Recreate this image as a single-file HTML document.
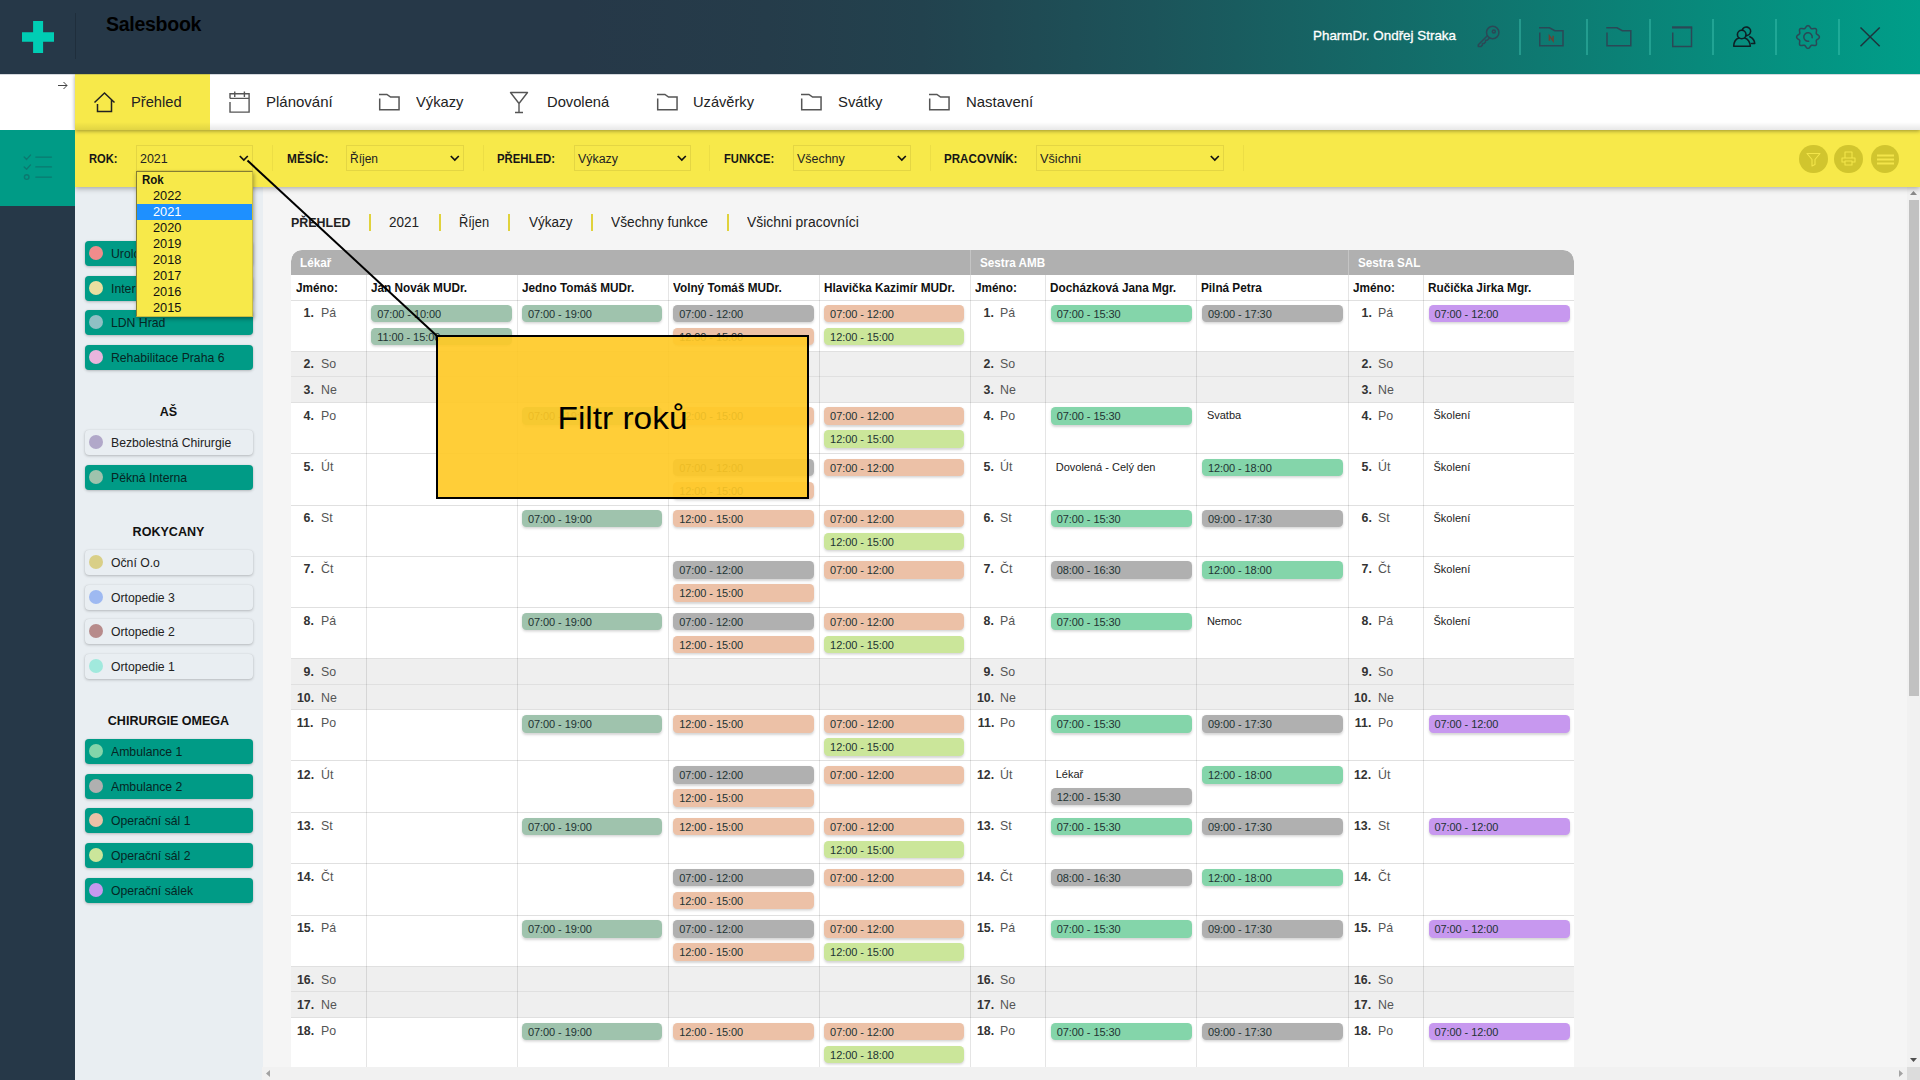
<!DOCTYPE html>
<html lang="cs"><head><meta charset="utf-8"><title>Salesbook</title>
<style>
*{box-sizing:border-box;margin:0;padding:0}
html,body{width:1920px;height:1080px;overflow:hidden;background:#f5f5f5}
body{position:relative;font-family:"Liberation Sans",sans-serif;color:#222;-webkit-font-smoothing:antialiased}
.abs{position:absolute}
#top{position:absolute;left:0;top:0;width:1920px;height:74px;background:linear-gradient(90deg,#263848 0%,#263848 30%,#253c4a 40%,#22424e 48%,#1c545a 60%,#11716c 76%,#08897b 88.5%,#009e89 100%)}
#top .vsep{position:absolute;top:18.500px;height:36px;width:2px;margin-left:-.5px;background:rgba(70,200,180,.42)}
#brand{position:absolute;left:106px;top:12px;font-weight:bold;font-size:19.5px;color:#000;letter-spacing:-0.3px;line-height:24px}
#user{position:absolute;left:1313px;top:27px;font-size:13.3px;color:#fff;-webkit-text-stroke:.3px #fff;line-height:18px;white-space:nowrap}
#nav{position:absolute;left:0;top:74px;width:1920px;height:56px;background:#fff}
#nav .navsh{position:absolute;left:75px;top:0;width:1845px;height:56px;box-shadow:0 1px 4px rgba(0,0,0,.38)}
#nav:before{content:'';position:absolute;left:0;top:0;width:1920px;height:1px;background:rgba(40,60,85,.2);z-index:2}
#nav:after{content:'';position:absolute;left:75px;bottom:0;width:1845px;height:8px;background:linear-gradient(180deg,rgba(0,0,0,0),rgba(0,0,0,.09));z-index:2}
#nav .act{position:absolute;left:75px;top:0;width:135px;height:56px;background:#f7e94a}
#nav .lbl{position:absolute;top:19px;font-size:15px;line-height:18px;color:#222;white-space:nowrap}
#nav svg{position:absolute}
#filter{position:absolute;left:75px;top:130px;width:1845px;height:57px;background:#f7e94a;box-shadow:0 2px 5px rgba(0,0,0,.28)}
#filter .fl{position:absolute;top:22px;font-size:12px;font-weight:bold;line-height:14px;color:#161616;white-space:nowrap}
#filter .sel{position:absolute;top:15px;height:26px;border:1px solid #e4d643;font-size:12.5px;line-height:24px;color:#222}
#filter .sel span{position:absolute;left:3.2px;top:1px;white-space:nowrap}
#filter .sel svg{position:absolute;right:3.5px;top:9px}
#filter .fs{position:absolute;top:15px;height:26px;width:1px;background:#ecde45}
#filter .cb{position:absolute;top:14.7px;width:28.5px;height:28.5px;border-radius:50%;background:#d1c52e}
#teal{position:absolute;left:0;top:130px;width:75px;height:76px;background:#009b86}
#dark{position:absolute;left:0;top:206px;width:75px;height:874px;background:#263848}
#side{position:absolute;left:75px;top:187px;width:188px;height:893px;background:#e9eef2}
#side .item{position:absolute;left:10px;width:168px;height:25px;border-radius:4px;background:#e9eef2;box-shadow:0 1px 3px rgba(0,0,0,.22),0 0 1px rgba(0,0,0,.12);font-size:13px;line-height:25px;color:#222;white-space:nowrap}
#side .item.on{background:#009b86;color:#062624}
#side .item i{position:absolute;left:4.3px;top:5.5px;width:14px;height:14px;border-radius:50%}
#side .item span{position:absolute;left:25.5px;top:0;transform:scaleX(.94);transform-origin:0 50%}
#side .stitle{position:absolute;left:0;width:187px;text-align:center;font-weight:bold;font-size:13.5px;line-height:20px;color:#111;transform:scaleX(.93);margin-top:1px}
#main{position:absolute;left:263px;top:187px;width:1644px;height:880px;background:#f5f5f5}
.bc{position:absolute;top:214px;font-size:14px;line-height:17px;color:#222;white-space:nowrap}
.bcs{position:absolute;top:214px;width:2px;height:17px;background:#e0d23c}
.tbl{position:absolute;left:291px;top:250px;width:1283px;height:817px;overflow:hidden;background:#fff;border-radius:11px 11px 0 0}
.tbl .sec{position:absolute;top:0;height:25px;background:#b0b0b0;color:#fff;font-weight:bold;font-size:12px;line-height:25px;border-left:1px solid #c4c4c4}
.tbl .sec.first{border-left:0;border-top-left-radius:11px}
.tbl .sec.last{border-top-right-radius:11px}
.tbl .sec span{position:absolute;left:8.5px;top:.5px;transform:scaleX(.975);transform-origin:0 50%;white-space:nowrap}
.tbl .sec.first span{left:9px}
.tbl .row{position:absolute;left:0;width:1283px;border-top:1px solid #e0e0e0;background:#fff}
.tbl .row.namerow{border-top:0}
.tbl .row.we{background:#efefef}
.tbl .vl{position:absolute;top:25px;width:1px;height:800px;background:rgba(0,0,0,.1)}
.tbl .hn{position:absolute;font-weight:bold;font-size:12px;line-height:25px;color:#111;white-space:nowrap;transform:scaleX(.98);transform-origin:0 50%;margin:.75px 0 0 0}
.tbl .dn{position:absolute;width:75px;height:25px;font-size:13px;line-height:25px;color:#555}
.tbl .dn b{position:absolute;right:53px;top:0;color:#333;transform:scaleX(.95);transform-origin:100% 50%}
.tbl .dn span{position:absolute;left:29px;top:0;font-weight:normal;transform:scaleX(.95);transform-origin:0 50%}
.tbl .pill{position:absolute;width:140.7px;height:17.5px;border-radius:4.5px;font-size:11px;line-height:18px;padding-left:6px;color:#233;box-shadow:0 1.5px 2.5px rgba(0,0,0,.17);white-space:nowrap;letter-spacing:-.08px}
.tbl .txt{position:absolute;font-size:11px;line-height:18px;color:#222;white-space:nowrap}
.sage{background:#9fc3ad}.gray{background:#b0b0b0}.ora{background:#ecc1a7}.lime{background:#cbe69a}.grn{background:#84d5aa}.pur{background:#c798ef}
#dd{position:absolute;left:136px;top:171px;width:116.5px;height:146px;background:#f7e94a;border:1px solid rgba(95,90,45,.75);border-right-color:rgba(95,90,45,.3);border-bottom-color:rgba(95,90,45,.3);box-shadow:1px 2px 4px rgba(0,0,0,.35);font-size:12.8px;line-height:16px;color:#111}
#dd div{height:16px;padding-left:16px;white-space:nowrap}
#dd div.h{font-weight:bold;padding-left:5px;transform:scaleX(.9);transform-origin:5px 50%}
#dd div.s{background:#1e90ff;color:#fff}
#call{position:absolute;left:436px;top:335px;width:373px;height:164px;border:2px solid #000;background:rgba(255,201,36,.91)}
#call span{position:absolute;left:0;width:100%;top:62px;text-align:center;font-size:31px;line-height:40px;color:#000}
#vsb{position:absolute;left:1907px;top:187px;width:13px;height:880px;background:#f1f1f1}
#vsb i{position:absolute;left:2px;top:13px;width:9.5px;height:496px;background:#c1c1c1}
#hsb{position:absolute;left:262px;top:1067px;width:1645px;height:13px;background:#f1f1f1}
#corner{position:absolute;left:1907px;top:1067px;width:13px;height:13px;background:#dcdcdc}

#n1{transform:scaleX(0.9787);transform-origin:0 50%}
#n2{transform:scaleX(0.9997);transform-origin:0 50%}
#n3{transform:scaleX(0.9822);transform-origin:0 50%}
#n4{transform:scaleX(0.9812);transform-origin:0 50%}
#n5{transform:scaleX(0.9758);transform-origin:0 50%}
#n6{transform:scaleX(0.9885);transform-origin:0 50%}
#n7{transform:scaleX(0.9956);transform-origin:0 50%}
#f1{transform:scaleX(0.9292);transform-origin:0 50%}
#f2{transform:scaleX(0.9881);transform-origin:0 50%}
#f3{transform:scaleX(0.9455);transform-origin:0 50%}
#f4{transform:scaleX(0.9306);transform-origin:0 50%}
#f5{transform:scaleX(0.9669);transform-origin:0 50%}
#s1{transform:scaleX(0.9978);transform-origin:0 50%}
#s2{transform:scaleX(0.9593);transform-origin:0 50%}
#s3{transform:scaleX(0.9926);transform-origin:0 50%}
#s4{transform:scaleX(0.9958);transform-origin:0 50%}
#s5{transform:scaleX(1.0174);transform-origin:0 50%}
#b1{transform:scaleX(0.9223);transform-origin:0 50%}
#b2{transform:scaleX(0.9629);transform-origin:0 50%}
#b3{transform:scaleX(0.9193);transform-origin:0 50%}
#b4{transform:scaleX(0.9662);transform-origin:0 50%}
#b5{transform:scaleX(0.9808);transform-origin:0 50%}
#b6{transform:scaleX(0.9918);transform-origin:0 50%}
#brand{transform:scaleX(1.0027);transform-origin:0 50%}
#user{transform:scaleX(1.0078);transform-origin:0 50%}
#ct{transform:scaleX(1.0781);transform-origin:50% 50%}
</style></head>
<body>
<div id="main"></div>
<div id="side">
<div class="item on" style="top:53.5px"><i style="background:#f08c8c"></i><span>Urologie</span></div>
<div class="item on" style="top:88.5px"><i style="background:#ebdfa0"></i><span>Interna</span></div>
<div class="item on" style="top:122.5px"><i style="background:#8fc0c4"></i><span>LDN Hrad</span></div>
<div class="item on" style="top:157.5px"><i style="background:#e9b5dd"></i><span>Rehabilitace Praha 6</span></div>
<div class="stitle" style="top:214px">AŠ</div>
<div class="item" style="top:242.5px"><i style="background:#b1a8c9"></i><span>Bezbolestná Chirurgie</span></div>
<div class="item on" style="top:277.5px"><i style="background:#9fc3ad"></i><span>Pěkná Interna</span></div>
<div class="stitle" style="top:334px">ROKYCANY</div>
<div class="item" style="top:362.5px"><i style="background:#d9cf87"></i><span>Oční O.o</span></div>
<div class="item" style="top:397.5px"><i style="background:#9eb9f1"></i><span>Ortopedie 3</span></div>
<div class="item" style="top:431.5px"><i style="background:#b78b8b"></i><span>Ortopedie 2</span></div>
<div class="item" style="top:466.5px"><i style="background:#a1e9dd"></i><span>Ortopedie 1</span></div>
<div class="stitle" style="top:523px">CHIRURGIE OMEGA</div>
<div class="item on" style="top:551.5px"><i style="background:#84d5aa"></i><span>Ambulance 1</span></div>
<div class="item on" style="top:586.5px"><i style="background:#b0b0b0"></i><span>Ambulance 2</span></div>
<div class="item on" style="top:620.5px"><i style="background:#ecc1a7"></i><span>Operační sál 1</span></div>
<div class="item on" style="top:655.5px"><i style="background:#cbe69a"></i><span>Operační sál 2</span></div>
<div class="item on" style="top:690.5px"><i style="background:#c798ef"></i><span>Operační sálek</span></div>
</div>

<div class="tbl">
<div class="sec first" style="left:0px;width:679px"><span>Lékař</span></div>
<div class="sec" style="left:679px;width:378px"><span>Sestra AMB</span></div>
<div class="sec last" style="left:1057px;width:226px"><span>Sestra SAL</span></div>
<div class="row namerow" style="top:25px;height:25px"></div>
<div class="row" style="top:50px;height:51px"></div>
<div class="row we" style="top:101px;height:25px"></div>
<div class="row we" style="top:126px;height:26px"></div>
<div class="row" style="top:152px;height:51px"></div>
<div class="row" style="top:203px;height:52px"></div>
<div class="row" style="top:255px;height:51px"></div>
<div class="row" style="top:306px;height:51px"></div>
<div class="row" style="top:357px;height:51px"></div>
<div class="row we" style="top:408px;height:26px"></div>
<div class="row we" style="top:434px;height:25px"></div>
<div class="row" style="top:459px;height:51px"></div>
<div class="row" style="top:510px;height:52px"></div>
<div class="row" style="top:562px;height:51px"></div>
<div class="row" style="top:613px;height:52px"></div>
<div class="row" style="top:665px;height:51px"></div>
<div class="row we" style="top:716px;height:25px"></div>
<div class="row we" style="top:741px;height:26px"></div>
<div class="row" style="top:767px;height:52px"></div>
<div class="hn" style="left:5px;top:25px">Jméno:</div>
<div class="dn" style="left:0px;top:50.19px"><b style="right:52.3px">1.</b><span style="left:29.6px">Pá</span></div>
<div class="dn" style="left:0px;top:101.44999999999999px"><b style="right:52.3px">2.</b><span style="left:29.6px">So</span></div>
<div class="dn" style="left:0px;top:127.07999999999998px"><b style="right:52.3px">3.</b><span style="left:29.6px">Ne</span></div>
<div class="dn" style="left:0px;top:152.70999999999998px"><b style="right:52.3px">4.</b><span style="left:29.6px">Po</span></div>
<div class="dn" style="left:0px;top:203.97000000000003px"><b style="right:52.3px">5.</b><span style="left:29.6px">Út</span></div>
<div class="dn" style="left:0px;top:255.23000000000002px"><b style="right:52.3px">6.</b><span style="left:29.6px">St</span></div>
<div class="dn" style="left:0px;top:306.49px"><b style="right:52.3px">7.</b><span style="left:29.6px">Čt</span></div>
<div class="dn" style="left:0px;top:357.75px"><b style="right:52.3px">8.</b><span style="left:29.6px">Pá</span></div>
<div class="dn" style="left:0px;top:409.01px"><b style="right:52.3px">9.</b><span style="left:29.6px">So</span></div>
<div class="dn" style="left:0px;top:434.64px"><b style="right:52.3px">10.</b><span style="left:29.6px">Ne</span></div>
<div class="dn" style="left:0px;top:460.27px"><b style="right:52.3px">11.</b><span style="left:29.6px">Po</span></div>
<div class="dn" style="left:0px;top:511.53px"><b style="right:52.3px">12.</b><span style="left:29.6px">Út</span></div>
<div class="dn" style="left:0px;top:562.79px"><b style="right:52.3px">13.</b><span style="left:29.6px">St</span></div>
<div class="dn" style="left:0px;top:614.05px"><b style="right:52.3px">14.</b><span style="left:29.6px">Čt</span></div>
<div class="dn" style="left:0px;top:665.31px"><b style="right:52.3px">15.</b><span style="left:29.6px">Pá</span></div>
<div class="dn" style="left:0px;top:716.57px"><b style="right:52.3px">16.</b><span style="left:29.6px">So</span></div>
<div class="dn" style="left:0px;top:742.2px"><b style="right:52.3px">17.</b><span style="left:29.6px">Ne</span></div>
<div class="dn" style="left:0px;top:767.83px"><b style="right:52.3px">18.</b><span style="left:29.6px">Po</span></div>
<div class="vl" style="left:75px"></div>
<div class="hn" style="left:80px;top:25px">Jan Novák MUDr.</div>
<div class="pill sage" style="left:80.25px;top:54.94px;width:140.3px">07:00 - 10:00</div>
<div class="pill sage" style="left:80.25px;top:77.94px;width:140.3px">11:00 - 15:00</div>
<div class="vl" style="left:226px"></div>
<div class="hn" style="left:231px;top:25px">Jedno Tomáš MUDr.</div>
<div class="pill sage" style="left:231px;top:54.94px;width:140.3px">07:00 - 19:00</div>
<div class="pill sage" style="left:231px;top:157.46px;width:140.3px">07:00 - 19:00</div>
<div class="pill sage" style="left:231px;top:259.98px;width:140.3px">07:00 - 19:00</div>
<div class="pill sage" style="left:231px;top:362.5px;width:140.3px">07:00 - 19:00</div>
<div class="pill sage" style="left:231px;top:465.02px;width:140.3px">07:00 - 19:00</div>
<div class="pill sage" style="left:231px;top:567.54px;width:140.3px">07:00 - 19:00</div>
<div class="pill sage" style="left:231px;top:670.06px;width:140.3px">07:00 - 19:00</div>
<div class="pill sage" style="left:231px;top:772.58px;width:140.3px">07:00 - 19:00</div>
<div class="vl" style="left:377px"></div>
<div class="hn" style="left:382px;top:25px">Volný Tomáš MUDr.</div>
<div class="pill gray" style="left:382.25px;top:54.94px;width:140.3px">07:00 - 12:00</div>
<div class="pill ora" style="left:382.25px;top:77.94px;width:140.3px">12:00 - 15:00</div>
<div class="pill ora" style="left:382.25px;top:157.46px;width:140.3px">12:00 - 15:00</div>
<div class="pill gray" style="left:382.25px;top:208.72px;width:140.3px">07:00 - 12:00</div>
<div class="pill ora" style="left:382.25px;top:231.72px;width:140.3px">12:00 - 15:00</div>
<div class="pill ora" style="left:382.25px;top:259.98px;width:140.3px">12:00 - 15:00</div>
<div class="pill gray" style="left:382.25px;top:311.24px;width:140.3px">07:00 - 12:00</div>
<div class="pill ora" style="left:382.25px;top:334.24px;width:140.3px">12:00 - 15:00</div>
<div class="pill gray" style="left:382.25px;top:362.5px;width:140.3px">07:00 - 12:00</div>
<div class="pill ora" style="left:382.25px;top:385.5px;width:140.3px">12:00 - 15:00</div>
<div class="pill ora" style="left:382.25px;top:465.02px;width:140.3px">12:00 - 15:00</div>
<div class="pill gray" style="left:382.25px;top:516.28px;width:140.3px">07:00 - 12:00</div>
<div class="pill ora" style="left:382.25px;top:539.28px;width:140.3px">12:00 - 15:00</div>
<div class="pill ora" style="left:382.25px;top:567.54px;width:140.3px">12:00 - 15:00</div>
<div class="pill gray" style="left:382.25px;top:618.8px;width:140.3px">07:00 - 12:00</div>
<div class="pill ora" style="left:382.25px;top:641.8px;width:140.3px">12:00 - 15:00</div>
<div class="pill gray" style="left:382.25px;top:670.06px;width:140.3px">07:00 - 12:00</div>
<div class="pill ora" style="left:382.25px;top:693.06px;width:140.3px">12:00 - 15:00</div>
<div class="pill ora" style="left:382.25px;top:772.58px;width:140.3px">12:00 - 15:00</div>
<div class="vl" style="left:528px"></div>
<div class="hn" style="left:533px;top:25px">Hlavička Kazimír MUDr.</div>
<div class="pill ora" style="left:533.1px;top:54.94px;width:140.3px">07:00 - 12:00</div>
<div class="pill lime" style="left:533.1px;top:77.94px;width:140.3px">12:00 - 15:00</div>
<div class="pill ora" style="left:533.1px;top:157.46px;width:140.3px">07:00 - 12:00</div>
<div class="pill lime" style="left:533.1px;top:180.46px;width:140.3px">12:00 - 15:00</div>
<div class="pill ora" style="left:533.1px;top:208.72px;width:140.3px">07:00 - 12:00</div>
<div class="pill ora" style="left:533.1px;top:259.98px;width:140.3px">07:00 - 12:00</div>
<div class="pill lime" style="left:533.1px;top:282.98px;width:140.3px">12:00 - 15:00</div>
<div class="pill ora" style="left:533.1px;top:311.24px;width:140.3px">07:00 - 12:00</div>
<div class="pill ora" style="left:533.1px;top:362.5px;width:140.3px">07:00 - 12:00</div>
<div class="pill lime" style="left:533.1px;top:385.5px;width:140.3px">12:00 - 15:00</div>
<div class="pill ora" style="left:533.1px;top:465.02px;width:140.3px">07:00 - 12:00</div>
<div class="pill lime" style="left:533.1px;top:488.02px;width:140.3px">12:00 - 15:00</div>
<div class="pill ora" style="left:533.1px;top:516.28px;width:140.3px">07:00 - 12:00</div>
<div class="pill ora" style="left:533.1px;top:567.54px;width:140.3px">07:00 - 12:00</div>
<div class="pill lime" style="left:533.1px;top:590.54px;width:140.3px">12:00 - 15:00</div>
<div class="pill ora" style="left:533.1px;top:618.8px;width:140.3px">07:00 - 12:00</div>
<div class="pill ora" style="left:533.1px;top:670.06px;width:140.3px">07:00 - 12:00</div>
<div class="pill lime" style="left:533.1px;top:693.06px;width:140.3px">12:00 - 15:00</div>
<div class="pill ora" style="left:533.1px;top:772.58px;width:140.3px">07:00 - 12:00</div>
<div class="pill lime" style="left:533.1px;top:795.58px;width:140.3px">12:00 - 18:00</div>
<div class="hn" style="left:684px;top:25px">Jméno:</div>
<div class="vl" style="left:679px"></div>
<div class="dn" style="left:679px;top:50.19px"><b style="right:51px">1.</b><span style="left:30.1px">Pá</span></div>
<div class="dn" style="left:679px;top:101.44999999999999px"><b style="right:51px">2.</b><span style="left:30.1px">So</span></div>
<div class="dn" style="left:679px;top:127.07999999999998px"><b style="right:51px">3.</b><span style="left:30.1px">Ne</span></div>
<div class="dn" style="left:679px;top:152.70999999999998px"><b style="right:51px">4.</b><span style="left:30.1px">Po</span></div>
<div class="dn" style="left:679px;top:203.97000000000003px"><b style="right:51px">5.</b><span style="left:30.1px">Út</span></div>
<div class="dn" style="left:679px;top:255.23000000000002px"><b style="right:51px">6.</b><span style="left:30.1px">St</span></div>
<div class="dn" style="left:679px;top:306.49px"><b style="right:51px">7.</b><span style="left:30.1px">Čt</span></div>
<div class="dn" style="left:679px;top:357.75px"><b style="right:51px">8.</b><span style="left:30.1px">Pá</span></div>
<div class="dn" style="left:679px;top:409.01px"><b style="right:51px">9.</b><span style="left:30.1px">So</span></div>
<div class="dn" style="left:679px;top:434.64px"><b style="right:51px">10.</b><span style="left:30.1px">Ne</span></div>
<div class="dn" style="left:679px;top:460.27px"><b style="right:51px">11.</b><span style="left:30.1px">Po</span></div>
<div class="dn" style="left:679px;top:511.53px"><b style="right:51px">12.</b><span style="left:30.1px">Út</span></div>
<div class="dn" style="left:679px;top:562.79px"><b style="right:51px">13.</b><span style="left:30.1px">St</span></div>
<div class="dn" style="left:679px;top:614.05px"><b style="right:51px">14.</b><span style="left:30.1px">Čt</span></div>
<div class="dn" style="left:679px;top:665.31px"><b style="right:51px">15.</b><span style="left:30.1px">Pá</span></div>
<div class="dn" style="left:679px;top:716.57px"><b style="right:51px">16.</b><span style="left:30.1px">So</span></div>
<div class="dn" style="left:679px;top:742.2px"><b style="right:51px">17.</b><span style="left:30.1px">Ne</span></div>
<div class="dn" style="left:679px;top:767.83px"><b style="right:51px">18.</b><span style="left:30.1px">Po</span></div>
<div class="vl" style="left:754px"></div>
<div class="hn" style="left:759px;top:25px">Docházková Jana Mgr.</div>
<div class="pill grn" style="left:759.75px;top:54.94px;width:141.2px">07:00 - 15:30</div>
<div class="pill grn" style="left:759.75px;top:157.46px;width:141.2px">07:00 - 15:30</div>
<div class="txt" style="left:764.75px;top:207.72px">Dovolená - Celý den</div>
<div class="pill grn" style="left:759.75px;top:259.98px;width:141.2px">07:00 - 15:30</div>
<div class="pill gray" style="left:759.75px;top:311.24px;width:141.2px">08:00 - 16:30</div>
<div class="pill grn" style="left:759.75px;top:362.5px;width:141.2px">07:00 - 15:30</div>
<div class="pill grn" style="left:759.75px;top:465.02px;width:141.2px">07:00 - 15:30</div>
<div class="txt" style="left:764.75px;top:515.28px">Lékař</div>
<div class="pill gray" style="left:759.75px;top:537.53px;width:141.2px">12:00 - 15:30</div>
<div class="pill grn" style="left:759.75px;top:567.54px;width:141.2px">07:00 - 15:30</div>
<div class="pill gray" style="left:759.75px;top:618.8px;width:141.2px">08:00 - 16:30</div>
<div class="pill grn" style="left:759.75px;top:670.06px;width:141.2px">07:00 - 15:30</div>
<div class="pill grn" style="left:759.75px;top:772.58px;width:141.2px">07:00 - 15:30</div>
<div class="vl" style="left:905px"></div>
<div class="hn" style="left:910px;top:25px">Pilná Petra</div>
<div class="pill gray" style="left:910.9000000000001px;top:54.94px;width:141.2px">09:00 - 17:30</div>
<div class="txt" style="left:915.9000000000001px;top:156.46px">Svatba</div>
<div class="pill grn" style="left:910.9000000000001px;top:208.72px;width:141.2px">12:00 - 18:00</div>
<div class="pill gray" style="left:910.9000000000001px;top:259.98px;width:141.2px">09:00 - 17:30</div>
<div class="pill grn" style="left:910.9000000000001px;top:311.24px;width:141.2px">12:00 - 18:00</div>
<div class="txt" style="left:915.9000000000001px;top:361.5px">Nemoc</div>
<div class="pill gray" style="left:910.9000000000001px;top:465.02px;width:141.2px">09:00 - 17:30</div>
<div class="pill grn" style="left:910.9000000000001px;top:516.28px;width:141.2px">12:00 - 18:00</div>
<div class="pill gray" style="left:910.9000000000001px;top:567.54px;width:141.2px">09:00 - 17:30</div>
<div class="pill grn" style="left:910.9000000000001px;top:618.8px;width:141.2px">12:00 - 18:00</div>
<div class="pill gray" style="left:910.9000000000001px;top:670.06px;width:141.2px">09:00 - 17:30</div>
<div class="pill gray" style="left:910.9000000000001px;top:772.58px;width:141.2px">09:00 - 17:30</div>
<div class="hn" style="left:1062px;top:25px">Jméno:</div>
<div class="vl" style="left:1057px"></div>
<div class="dn" style="left:1057px;top:50.19px"><b style="right:51.5px">1.</b><span style="left:29.8px">Pá</span></div>
<div class="dn" style="left:1057px;top:101.44999999999999px"><b style="right:51.5px">2.</b><span style="left:29.8px">So</span></div>
<div class="dn" style="left:1057px;top:127.07999999999998px"><b style="right:51.5px">3.</b><span style="left:29.8px">Ne</span></div>
<div class="dn" style="left:1057px;top:152.70999999999998px"><b style="right:51.5px">4.</b><span style="left:29.8px">Po</span></div>
<div class="dn" style="left:1057px;top:203.97000000000003px"><b style="right:51.5px">5.</b><span style="left:29.8px">Út</span></div>
<div class="dn" style="left:1057px;top:255.23000000000002px"><b style="right:51.5px">6.</b><span style="left:29.8px">St</span></div>
<div class="dn" style="left:1057px;top:306.49px"><b style="right:51.5px">7.</b><span style="left:29.8px">Čt</span></div>
<div class="dn" style="left:1057px;top:357.75px"><b style="right:51.5px">8.</b><span style="left:29.8px">Pá</span></div>
<div class="dn" style="left:1057px;top:409.01px"><b style="right:51.5px">9.</b><span style="left:29.8px">So</span></div>
<div class="dn" style="left:1057px;top:434.64px"><b style="right:51.5px">10.</b><span style="left:29.8px">Ne</span></div>
<div class="dn" style="left:1057px;top:460.27px"><b style="right:51.5px">11.</b><span style="left:29.8px">Po</span></div>
<div class="dn" style="left:1057px;top:511.53px"><b style="right:51.5px">12.</b><span style="left:29.8px">Út</span></div>
<div class="dn" style="left:1057px;top:562.79px"><b style="right:51.5px">13.</b><span style="left:29.8px">St</span></div>
<div class="dn" style="left:1057px;top:614.05px"><b style="right:51.5px">14.</b><span style="left:29.8px">Čt</span></div>
<div class="dn" style="left:1057px;top:665.31px"><b style="right:51.5px">15.</b><span style="left:29.8px">Pá</span></div>
<div class="dn" style="left:1057px;top:716.57px"><b style="right:51.5px">16.</b><span style="left:29.8px">So</span></div>
<div class="dn" style="left:1057px;top:742.2px"><b style="right:51.5px">17.</b><span style="left:29.8px">Ne</span></div>
<div class="dn" style="left:1057px;top:767.83px"><b style="right:51.5px">18.</b><span style="left:29.8px">Po</span></div>
<div class="vl" style="left:1132px"></div>
<div class="hn" style="left:1137px;top:25px">Ručička Jirka Mgr.</div>
<div class="pill pur" style="left:1137.5px;top:54.94px;width:141.2px">07:00 - 12:00</div>
<div class="txt" style="left:1142.5px;top:156.46px">Školení</div>
<div class="txt" style="left:1142.5px;top:207.72px">Školení</div>
<div class="txt" style="left:1142.5px;top:258.98px">Školení</div>
<div class="txt" style="left:1142.5px;top:310.24px">Školení</div>
<div class="txt" style="left:1142.5px;top:361.5px">Školení</div>
<div class="pill pur" style="left:1137.5px;top:465.02px;width:141.2px">07:00 - 12:00</div>
<div class="pill pur" style="left:1137.5px;top:567.54px;width:141.2px">07:00 - 12:00</div>
<div class="pill pur" style="left:1137.5px;top:670.06px;width:141.2px">07:00 - 12:00</div>
<div class="pill pur" style="left:1137.5px;top:772.58px;width:141.2px">07:00 - 12:00</div>
</div>

<div class="bc" id="b1" style="left:291px;font-weight:bold;font-size:13.5px">PŘEHLED</div>
<div class="bcs" style="left:369px"></div>
<div class="bc" id="b2" style="left:389px">2021</div>
<div class="bcs" style="left:439px"></div>
<div class="bc" id="b3" style="left:459px">Říjen</div>
<div class="bcs" style="left:508px"></div>
<div class="bc" id="b4" style="left:529px">Výkazy</div>
<div class="bcs" style="left:591px"></div>
<div class="bc" id="b5" style="left:611px">Všechny funkce</div>
<div class="bcs" style="left:726.5px"></div>
<div class="bc" id="b6" style="left:747px">Všichni pracovníci</div>

<div id="vsb"><i></i>
<svg class="abs" style="left:3px;top:4px" width="7" height="4" viewBox="0 0 7 4"><path d="M0 4L3.5 0 7 4z" fill="#8a8a8a"/></svg>
<svg class="abs" style="left:3px;top:871px" width="7" height="4" viewBox="0 0 7 4"><path d="M0 0L3.5 4 7 0z" fill="#505050"/></svg>
</div>
<div id="hsb">
<svg class="abs" style="left:4px;top:3px" width="4" height="7" viewBox="0 0 4 7"><path d="M4 0L0 3.5 4 7z" fill="#a3a3a3"/></svg>
<svg class="abs" style="left:1637px;top:3px" width="4" height="7" viewBox="0 0 4 7"><path d="M0 0L4 3.5 0 7z" fill="#a3a3a3"/></svg>
</div>
<div id="corner"></div>

<div id="filter">
<div class="fl" id="f1" style="left:14px">ROK:</div>
<div class="sel" style="left:61px;width:117px"><span id="s1">2021</span><svg width="10" height="7" viewBox="0 0 10 7"><path d="M.8 1l4 4 4-4" fill="none" stroke="#111" stroke-width="1.7"/></svg></div>
<div class="fs" style="left:197px"></div>
<div class="fl" id="f2" style="left:212px">MĚSÍC:</div>
<div class="sel" style="left:271px;width:118px"><span id="s2">Říjen</span><svg width="10" height="7" viewBox="0 0 10 7"><path d="M.8 1l4 4 4-4" fill="none" stroke="#111" stroke-width="1.7"/></svg></div>
<div class="fs" style="left:408px"></div>
<div class="fl" id="f3" style="left:422px">PŘEHLED:</div>
<div class="sel" style="left:498.5px;width:117.5px"><span id="s3">Výkazy</span><svg width="10" height="7" viewBox="0 0 10 7"><path d="M.8 1l4 4 4-4" fill="none" stroke="#111" stroke-width="1.7"/></svg></div>
<div class="fs" style="left:634px"></div>
<div class="fl" id="f4" style="left:649px">FUNKCE:</div>
<div class="sel" style="left:718px;width:118px"><span id="s4">Všechny</span><svg width="10" height="7" viewBox="0 0 10 7"><path d="M.8 1l4 4 4-4" fill="none" stroke="#111" stroke-width="1.7"/></svg></div>
<div class="fs" style="left:855px"></div>
<div class="fl" id="f5" style="left:869px">PRACOVNÍK:</div>
<div class="sel" style="left:961px;width:188px"><span id="s5">Všichni</span><svg width="10" height="7" viewBox="0 0 10 7"><path d="M.8 1l4 4 4-4" fill="none" stroke="#111" stroke-width="1.7"/></svg></div>
<div class="fs" style="left:1168px"></div>
<div class="cb" style="left:1724px"><svg class="abs" style="left:7px;top:7px" width="15" height="15" viewBox="0 0 15 15" fill="none" stroke="#f3e54a" stroke-width="1.1" stroke-linejoin="round"><path d="M1 1.5h13L9 7.5v5L6 14V7.5z"/></svg></div>
<div class="cb" style="left:1759px"><svg class="abs" style="left:7px;top:6.5px" width="15" height="16" viewBox="0 0 15 16" fill="none" stroke="#f3e54a" stroke-width="1.1" stroke-linejoin="round"><path d="M4 7V1h7v6M4 11H1V7h13v4h-3M4 10h7v4H4z"/></svg></div>
<div class="cb" style="left:1795.5px"><svg class="abs" style="left:6px;top:9px" width="17" height="11" viewBox="0 0 17 11" fill="none" stroke="#f3e54a" stroke-width="1.9"><path d="M0 1.500h17M0 5.500h17M0 9.500h17"/></svg></div>
</div>

<div id="nav">
<div class="navsh"></div>
<div class="act"></div>
<svg style="left:58px;top:7px" width="10" height="9" viewBox="0 0 10 9" fill="none" stroke="#444" stroke-width="1"><path d="M0 4.5h9M5.5 1l3.5 3.5L5.5 8"/></svg>
<svg style="left:93px;top:17px" width="23" height="22" viewBox="0 0 23 22" fill="none" stroke="#222" stroke-width="1.5" stroke-linejoin="miter"><path d="M1.500 11.500L11.500 2l10 9.500M4.500 13v7.500h14v-12"/></svg>
<div class="lbl" id="n1" style="left:131px">Přehled</div>
<svg style="left:228px;top:16px" width="23" height="24" viewBox="0 0 23 24" fill="none" stroke="#555" stroke-width="1.4"><path d="M2 8.400V3.750H21.100V22.100H2V12.100M2 8.400H21.100M6.750 1.500V7M16.400 1.500V7"/></svg>
<div class="lbl" id="n2" style="left:266px">Plánování</div>
<svg style="left:377px;top:19px" width="24" height="19" viewBox="0 0 24 19" fill="none" stroke="#555" stroke-width="1.5"><path d="M2.700 5.400V16.800H22.050V4.100H13.600L9.900 1.450H2"/></svg>
<div class="lbl" id="n3" style="left:416px">Výkazy</div>
<svg style="left:509px;top:17px" width="20" height="23" viewBox="0 0 20 23" fill="none" stroke="#555" stroke-width="1.4" stroke-linejoin="round"><path d="M1.5 1.5h17L10 12.5zM10 12.5v9M6 21.5h8"/></svg>
<div class="lbl" id="n4" style="left:547px">Dovolená</div>
<svg style="left:655px;top:19px" width="24" height="19" viewBox="0 0 24 19" fill="none" stroke="#555" stroke-width="1.5"><path d="M2.700 5.400V16.800H22.050V4.100H13.600L9.900 1.450H2"/></svg>
<div class="lbl" id="n5" style="left:693px">Uzávěrky</div>
<svg style="left:799px;top:19px" width="24" height="19" viewBox="0 0 24 19" fill="none" stroke="#555" stroke-width="1.5"><path d="M2.700 5.400V16.800H22.050V4.100H13.600L9.900 1.450H2"/></svg>
<div class="lbl" id="n6" style="left:838px">Svátky</div>
<svg style="left:927px;top:19px" width="24" height="19" viewBox="0 0 24 19" fill="none" stroke="#555" stroke-width="1.5"><path d="M2.700 5.400V16.800H22.050V4.100H13.600L9.900 1.450H2"/></svg>
<div class="lbl" id="n7" style="left:966px">Nastavení</div>
</div>

<div id="dark"></div>
<div id="teal">
<svg class="abs" style="left:22px;top:153px;margin-top:-130px" width="32" height="30" viewBox="0 0 32 30" fill="none" stroke="#0a7a70" stroke-width="1.4" stroke-linecap="round" stroke-linejoin="round">
<path d="M2.200 4.100l2.400 2.300 3.900-4.300M2.200 13.900l2.400 2.300 3.900-4.300"/><circle cx="4.700" cy="24.100" r="2.300"/><path d="M13.800 4.100h15.600M13.800 13.900h15.600M13.800 24.100h15.600"/></svg>
</div>
<div id="top">
<svg class="abs" style="left:21.7px;top:20.5px" width="32" height="32" viewBox="0 0 32 32"><path d="M11.1 0h10v11.2H32v9.500H21.100V32h-10V20.700H0v-9.500h11.100z" fill="#00cdb4"/></svg>
<div class="abs" style="left:75px;top:13px;width:1px;height:46px;background:#1f2e3c"></div>
<div id="brand">Salesbook</div>
<div id="user">PharmDr. Ondřej Straka</div>
<div class="vsep" style="left:1519px"></div>
<div class="vsep" style="left:1586px"></div>
<div class="vsep" style="left:1649px"></div>
<div class="vsep" style="left:1712px"></div>
<div class="vsep" style="left:1775px"></div>
<div class="vsep" style="left:1838px"></div>
<!-- key -->
<svg class="abs" style="left:1477px;top:24px" width="24" height="24" viewBox="0 0 24 24" fill="none" stroke="#2b4856" stroke-width="1.5" stroke-linecap="round" stroke-linejoin="round"><circle cx="15.700" cy="8.500" r="6.200"/><circle cx="16.800" cy="7.400" r="1.500"/><path d="M10.300 11.800L1.300 20.800v1.700h2.700l1.400-1.400v-1.700h1.700l1.400-1.400v-1.700h1.700l2.300-2.300"/></svg>
<!-- folder N -->
<svg class="abs" style="left:1538px;top:26px" width="27" height="22" viewBox="0 0 27 22" fill="none" stroke="#2b4856" stroke-width="1.5"><path d="M1.750 6.500V19.750H25V4.750H16.800L11.500 1.750H1"/><path d="M11.400 14.800v-5l3.700 5v-5" stroke="#6e4032" stroke-width="1.400"/></svg>
<!-- folder -->
<svg class="abs" style="left:1605px;top:26px" width="28" height="22" viewBox="0 0 28 22" fill="none" stroke="#2b4856" stroke-width="1.5"><path d="M2 6.500V19.750H25.800V4.750H17.300L12 1.750H1.250"/></svg>
<!-- square -->
<svg class="abs" style="left:1671px;top:25px" width="23" height="24" viewBox="0 0 23 24" fill="none" stroke="#2b4856" stroke-width="1.5"><path d="M1 2.400H21.250" stroke-width="2.250"/><path d="M20.500 2.400V21.500H1.750V7.500"/></svg>
<!-- users -->
<svg class="abs" style="left:1732px;top:26px" width="24" height="23" viewBox="0 0 24 23" fill="none" stroke="#0e2025" stroke-width="1.6" stroke-linejoin="round" stroke-linecap="round"><path d="M10.140 4.220A4.300 4.300 0 1 1 13.860 9.580"/><circle cx="9.700" cy="8.500" r="4.300"/><path d="M6.800 11.900C3.800 13 1.750 15.700 1.750 20.200H18.300C18 15.700 16 13 12.800 11.900"/><path d="M17.800 10.800C20.500 12 22.500 14.500 22.700 17.500H19.700"/></svg>
<!-- gear -->
<svg class="abs" style="left:1795px;top:23.600px" width="26" height="26" viewBox="0 0 26 26" fill="none" stroke="#2b4856" stroke-width="1.5" stroke-linejoin="round" stroke-linecap="round"><path d="M13.0 1.6L14.0 1.9L14.8 2.7L15.5 3.8L16.1 4.5L16.8 4.8L17.8 4.7L19.0 4.5L20.2 4.5L21.1 4.9L21.5 5.8L21.5 7.0L21.3 8.2L21.2 9.2L21.5 9.9L22.2 10.5L23.3 11.2L24.1 12.0L24.4 13.0L24.1 14.0L23.3 14.8L22.2 15.5L21.5 16.1L21.2 16.8L21.3 17.8L21.5 19.0L21.5 20.2L21.1 21.1L20.2 21.5L19.0 21.5L17.8 21.3L16.8 21.2L16.1 21.5L15.5 22.2L14.8 23.3L14.0 24.1L13.0 24.4L12.0 24.1L11.2 23.3L10.5 22.2L9.9 21.5L9.2 21.2L8.2 21.3L7.0 21.5L5.8 21.5L4.9 21.1L4.5 20.2L4.5 19.0L4.7 17.8L4.8 16.8L4.5 16.1L3.8 15.5L2.7 14.8L1.9 14.0L1.6 13.0L1.9 12.0L2.7 11.2L3.8 10.5L4.5 9.9L4.8 9.2L4.7 8.2L4.5 7.0L4.5 5.8L4.9 4.9L5.8 4.5L7.0 4.5L8.2 4.7L9.2 4.8L9.9 4.5L10.5 3.8L11.2 2.7L12.0 1.9Z"/><path d="M13.730 17.140A4.200 4.200 0 1 1 17.140 13.730"/></svg>
<!-- close -->
<svg class="abs" style="left:1859px;top:25.500px" width="23" height="22" viewBox="0 0 23 22" fill="none" stroke="#1d343c" stroke-width="1.5"><path d="M1.500 1.500L20.700 20.300M20.700 1.500L1.500 20.300"/></svg>
</div>

<div id="dd"><div class="h">Rok</div><div>2022</div><div class="s">2021</div><div>2020</div><div>2019</div><div>2018</div><div>2017</div><div>2016</div><div>2015</div></div>

<svg class="abs" style="left:240px;top:150px" width="210" height="200" viewBox="0 0 210 200"><path d="M7.500 10.500L197 186" stroke="#000" stroke-width="2" fill="none"/></svg>
<div id="call"><span id="ct">Filtr roků</span></div>
</body></html>
